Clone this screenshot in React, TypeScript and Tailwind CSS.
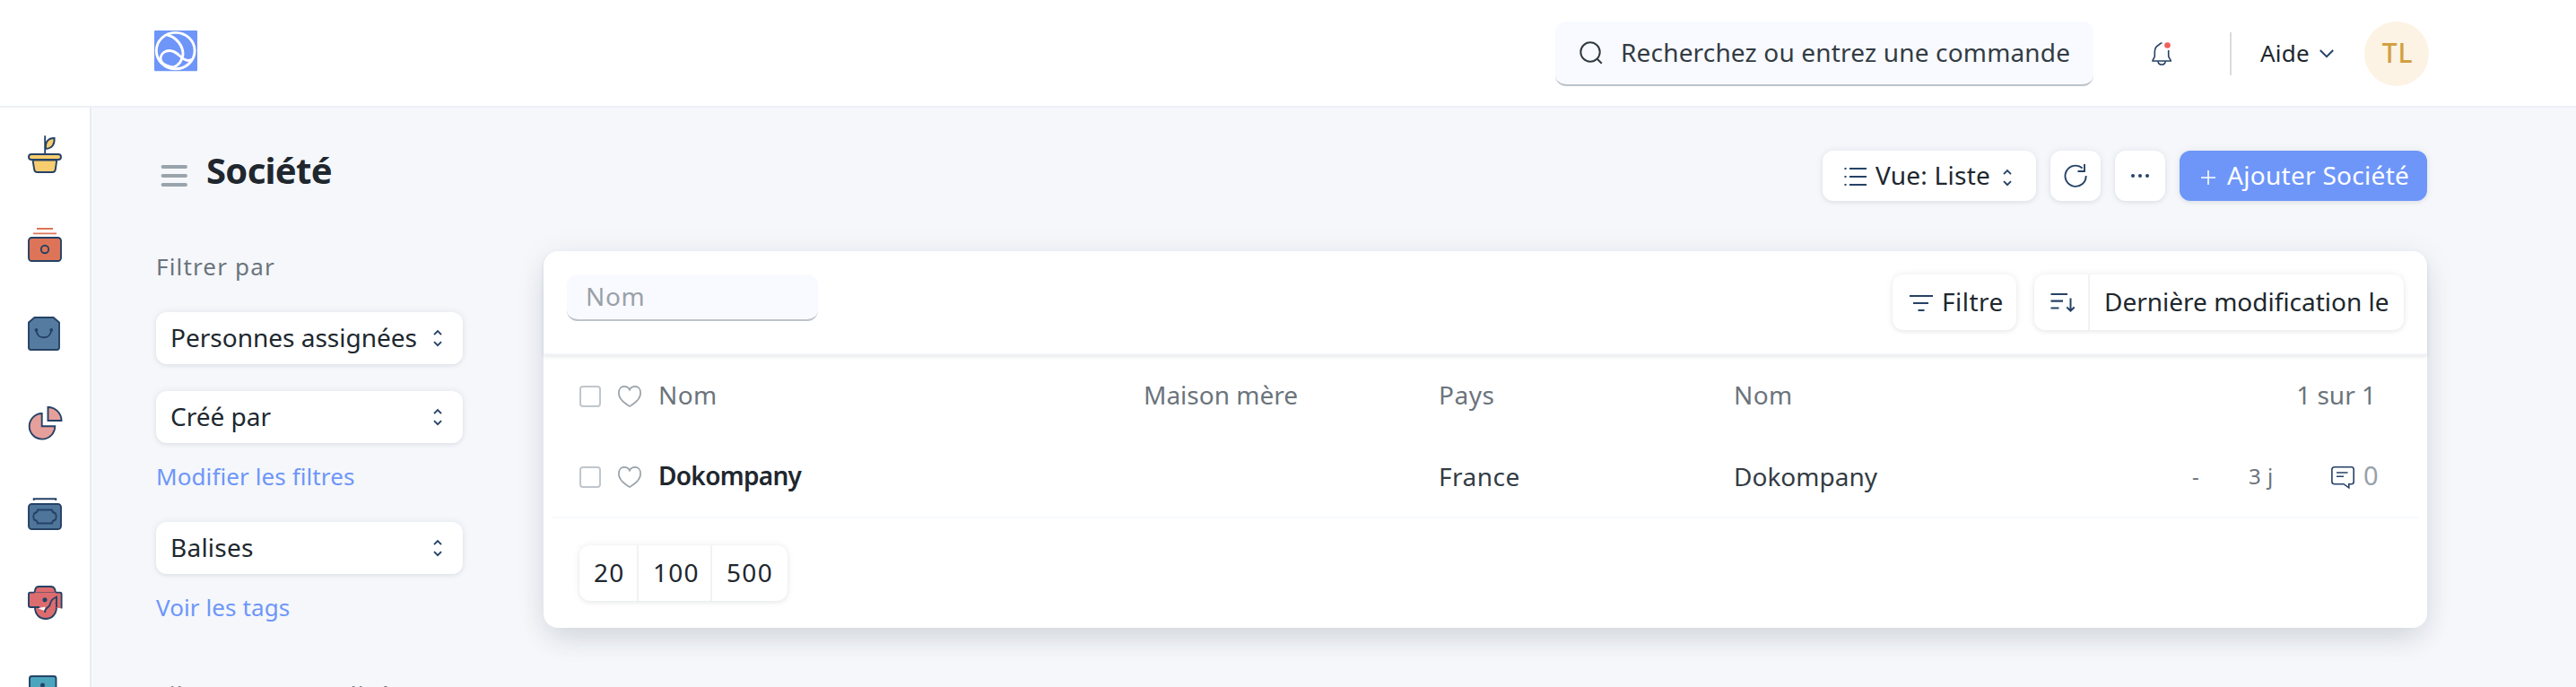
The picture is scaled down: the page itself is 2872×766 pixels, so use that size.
import React from "react";

const SHADOW = "shadow-[0_2px_4px_rgba(25,39,52,0.05),0_0_8px_rgba(25,39,52,0.08)]";

function Logo() {
  return (
    <svg className="mt-[34px] h-[46px] w-12 shrink-0" viewBox="0 0 48 46" fill="none">
      <rect width="48" height="45.3" rx="1" fill="#6e95f8" />
      <g stroke="#fff" strokeWidth="2.9">
        <ellipse cx="23.7" cy="22.6" rx="21.4" ry="20.2" />
        <path d="M14.5 5C24 7 32.500 17 32 27C31 34 27.500 38.500 21.500 41" />
        <path d="M21.500 41C12 39.500 6.500 35.500 7 30C8 25.500 12 22.500 17 22.500C27 22.500 30 33.500 38 33.500C39.500 33.500 41 33 42 32" />
      </g>
    </svg>
  );
}

const navIcons: React.ReactNode[] = [
  <g key="pot" fill="#f8cd6f">
    <path d="M10.500 30.500L12.200 41Q12.700 44 15.500 44H32.500Q35.300 44 35.800 41L37.300 30.500Z" />
    <rect x="6" y="24" width="36" height="6" rx="3" />
    <path d="M25 17.800C24.300 10.500 27.500 5.900 34.600 6C35 12.500 32.500 17.600 25 17.800Z" />
    <path d="M24.200 3.300V24" />
  </g>,
  <g key="safe">
    <path d="M15 7H33M11 12.300H37" stroke="#de7457" strokeWidth="1.800" />
    <rect x="6" y="17" width="36" height="26" rx="3.500" fill="#de7457" />
    <circle cx="24" cy="30" r="4.200" />
  </g>,
  <g key="bag">
    <path d="M12.500 6H33.500L40 11.500V39.500Q40 42 37.500 42H8.500Q6 42 6 39.500V11.500Z" fill="#557ca0" />
    <path d="M14.500 20C15 25 18 28.300 22.700 28.300C27.500 28.300 30.700 25 31.200 20" />
    <circle cx="14.500" cy="20" r="1" />
    <circle cx="31.200" cy="20" r="1" />
  </g>,
  <g key="pie" fill="#e5a09b">
    <path d="M20.700 13A14.300 14.300 0 1 0 35.300 27.300H20.700Z" />
    <path d="M27.500 6V21H42.500A15 15 0 0 0 27.500 6Z" />
  </g>,
  <g key="money">
    <path d="M11.700 10V8.300H36.300V10" />
    <rect x="6" y="14" width="36" height="28" rx="3.500" fill="#4f759a" />
    <path d="M16 20.500H32Q32.500 24 36 24.500Q37.500 28 36 31.500Q32.500 32 32 35.500H16Q15.500 32 12 31.500Q10.500 28 12 24.500Q15.500 24 16 20.500Z" />
  </g>,
  <g key="people">
    <path d="M12.500 13Q13 6 17 6H31Q35.500 6 36 13Z" fill="#dd6c6e" />
    <path d="M13 24H37V29C37 37 31.500 42 25 42C18 42 13 37 13 29Z" fill="#dd6c6e" />
    <path d="M7.500 12.500H41Q42.500 12.500 42.500 14V30H37V24L24 29H8Q6 29 6 27.500V14.500Q6 12.500 7.500 12.500Z" fill="#dd6c6e" stroke="none" />
    <path d="M16.500 30.200L24.500 28.500L23.500 33Z" fill="#fff" stroke="none" />
    <path d="M42.600 30.500V14Q42.600 12.600 41 12.600H36M12.500 12.600H7.500Q6 12.600 6 14.500V27Q6 29 8 29H18" />
    <path d="M24 35C24 30.500 25.500 31 28 28.500C32 26 27 22 37 17.500V29" />
    <circle cx="24" cy="20.700" r="1.600" fill="#254266" />
  </g>,
  <g key="asset">
    <rect x="7" y="6" width="29.500" height="36" rx="2.500" fill="#4ba5bd" />
    <circle cx="21.500" cy="16" r="1.500" fill="#254266" />
  </g>,
];

function Updown() {
  return (
    <svg className="h-5 w-3 shrink-0" viewBox="0 0 12 20" fill="none" stroke="#254266" strokeWidth="1.9">
      <path d="M2 6.200L6 2.200L10 6.200M2 14.200L6 18.200L10 14.200" />
    </svg>
  );
}

function Select({ label, track }: { label: string; track: string }) {
  return (
    <div className={`flex h-[58px] w-[342px] items-center justify-between rounded-xl bg-white pr-[22px] pl-4 ${SHADOW}`}>
      <span className={`pb-[3px] text-[28px] leading-9 text-[#20272e] ${track}`}>{label}</span>
      <Updown />
    </div>
  );
}

function Heart() {
  return (
    <svg className="ml-[18px] h-[26px] w-7 shrink-0" viewBox="0 0 28 26" fill="none" stroke="#98a1a9" strokeWidth="1.700">
      <path d="M14 24.100C9 21 1.900 16.500 1.900 9C1.900 4.500 4.500 1.900 7.800 1.900C10.500 1.900 12.600 2.800 14 5.600C15.400 2.800 17.500 1.900 20.200 1.900C23.500 1.900 26.100 4.500 26.100 9C26.100 16.500 19 21 14 24.100Z" />
    </svg>
  );
}

function Checkbox() {
  return <div className="size-6 shrink-0 rounded-[4px] border-2 border-[#c0c6cc] bg-white" />;
}

export default function App() {
  return (
    <div className="flex h-[766px] w-[2872px] flex-col overflow-hidden bg-[#f5f7fb] font-['Noto_Sans','DejaVu_Sans',sans-serif] whitespace-nowrap">
      <header className="flex h-[120px] shrink-0 border-b-2 border-[#edf0f5] bg-white pl-[172px]">
        <Logo />
        <div className="mt-6 ml-[1514px] flex h-[72px] w-[600px] shrink-0 items-center rounded-xl border-b-2 border-[#bcc3ca] bg-[#f9faff] pl-[27px]">
          <svg className="size-[26px]" viewBox="0 0 26 26" fill="none" stroke="#333c44" strokeWidth="2">
            <circle cx="12" cy="12" r="10.700" />
            <path d="M19.500 19.500L24.800 24.800" />
          </svg>
          <span className="ml-[20px] pb-[3px] text-[28px] leading-9 tracking-[0.17px] text-[#333c44]">Recherchez ou entrez une commande</span>
        </div>
        <svg className="mt-[46px] ml-[63px] h-7 w-7 shrink-0" viewBox="0 0 28 28" fill="none" stroke="#254266" strokeWidth="1.600">
          <path d="M13.500 2C11 2 11.200 3.500 9.500 4.200C6.500 5.800 5.300 8.500 5.300 12V16.500C5.300 19 3 19.500 3 22H23.200C23.200 19.500 20.700 19 20.700 16.500V10" />
          <path d="M9 22.300C9.500 27.300 16.700 27.300 17.200 22.300" />
          <circle cx="19.500" cy="4.500" r="3.300" fill="#f0605b" stroke="none" />
        </svg>
        <div className="mt-9 ml-[61px] h-12 w-0.5 shrink-0 bg-[#d9dbdd]" />
        <div className="mt-6 ml-8 flex h-[72px] items-center">
          <span className="w-[56px] pb-0.5 text-[26px] leading-9 tracking-[0.23px] text-[#20272e]">Aide</span>
          <svg className="ml-[9px] h-3 w-[18px]" viewBox="0 0 18 12" fill="none" stroke="#254266" strokeWidth="2">
            <path d="M1.800 2L9 9.200L16.200 2" />
          </svg>
        </div>
        <div className="mt-6 ml-[33px] flex size-[72px] shrink-0 items-center justify-center rounded-full bg-[#fdf3e4] pb-0.5 pl-0.5 text-[30px] leading-9 font-medium tracking-[0.8px] text-[#d1a041]">TL</div>
      </header>

      <div className="flex min-h-0 flex-1">
        <nav className="flex w-[102px] shrink-0 flex-col overflow-hidden border-r-2 border-[#e8ecf1] bg-white pt-0.5">
          {navIcons.map((icon, i) => (
            <div key={i} className="flex h-[100px] shrink-0 items-center justify-center">
              <svg className="size-12" viewBox="0 0 48 48" fill="none" stroke="#254266" strokeWidth="1.900">
                {icon}
              </svg>
            </div>
          ))}
        </nav>

        <main className="flex w-[2604px] shrink-0 flex-col pl-[72px]">
          <div className="flex h-[160px] shrink-0">
            <svg className="mt-[60px] ml-1 h-8 w-8 shrink-0" viewBox="0 0 32 32" fill="none" stroke="#99a3ab" strokeWidth="3.800" strokeLinecap="round">
              <path d="M3.500 6H29M3.500 16H29M3.500 26H29" />
            </svg>
            <h1 className="mt-[45px] ml-5 text-[40px] leading-[50px] font-bold tracking-[-0.7px] text-[#20272e]">Société</h1>
            <div className="mt-12 ml-auto flex h-14 text-[28px] leading-9 text-[#20272e]">
              <div className={`flex w-[238px] items-center rounded-xl bg-white pl-6 ${SHADOW}`}>
                <svg className="h-6 w-[26px]" viewBox="0 0 26 24" fill="none" stroke="#254266" strokeWidth="2.200">
                  <path d="M6 4H25M6 13H25M6 22H25" />
                  <path d="M0.500 4H2.500M0.500 13H2.500M0.500 22H2.500" />
                </svg>
                <span className="ml-[9px] w-[134px] pb-0.5 tracking-[0.24px]">Vue: Liste</span>
                <div className="ml-[7px] pt-1"><Updown /></div>
              </div>
              <div className={`ml-4 flex w-14 items-center justify-center rounded-xl bg-white ${SHADOW}`}>
                <svg className="size-7" viewBox="0 0 28 28" fill="none" stroke="#254266" strokeWidth="1.900">
                  <path d="M21.700 5.500A11.600 11.600 0 1 0 25.700 14" />
                  <path d="M24 1V9H16.500" />
                </svg>
              </div>
              <div className={`ml-4 flex w-14 items-center justify-center gap-[4px] rounded-xl bg-white ${SHADOW}`}>
                <div className="size-[4px] rounded-full bg-[#254266]" />
                <div className="size-[4px] rounded-full bg-[#254266]" />
                <div className="size-[4px] rounded-full bg-[#254266]" />
              </div>
              <div className={`ml-4 flex w-[276px] items-center rounded-xl bg-[#6e96f9] pl-[23px] text-white ${SHADOW}`}>
                <svg className="mt-1 size-[18px]" viewBox="0 0 18 18" fill="none" stroke="#fff" strokeWidth="1.600">
                  <path d="M9 1V17M1 9H17" />
                </svg>
                <span className="ml-3 pb-0.5 tracking-[0.29px]">Ajouter Société</span>
              </div>
            </div>
          </div>

          <div className="flex">
            <aside className="flex w-[432px] shrink-0 flex-col">
              <div className="h-[68px] pt-px text-[26px] leading-8 tracking-[1.170px] text-[#6b747c]">Filtrer par</div>
              <Select label="Personnes assignées" track="tracking-[0px]" />
              <div className="h-[30px]" />
              <Select label="Créé par" track="tracking-[0px]" />
              <div className="h-[88px] pt-[19px] text-[26px] leading-9 tracking-[0.100px] text-[#6e96f9]">Modifier les filtres</div>
              <Select label="Balises" track="tracking-[0.240px]" />
              <div className="h-[118px] pt-[19px] text-[26px] leading-9 tracking-[0.100px] text-[#6e96f9]">Voir les tags</div>
              <div className="text-[26px] leading-8 tracking-[1.250px] text-[#6b747c]">Filtres personnalisés</div>
            </aside>

            <section className="h-[420px] w-[2100px] shrink-0 rounded-2xl bg-white shadow-[0_16px_32px_-6px_rgba(25,39,52,0.12),0_4px_36px_rgba(25,39,52,0.07)]">
              <div className="flex h-[116px] rounded-t-2xl border-b-2 border-[#f3f4fa] pt-[26px] pr-[26px] pl-[26px] shadow-[0_2px_4px_rgba(25,39,52,0.1)]">
                <div className="flex h-[52px] w-[280px] items-center rounded-xl border-b-2 border-[#bcc3ca] bg-[#f9faff] pb-[3px] pl-[21px] text-[28px] leading-9 tracking-[0.640px] text-[#99a1a8]">Nom</div>
                <div className="ml-auto flex h-[62px] text-[28px] leading-9 text-[#20272e]">
                  <div className={`flex w-[138px] items-center rounded-xl bg-white pl-[19px] ${SHADOW}`}>
                    <svg className="mt-0.5 h-5 w-[26px]" viewBox="0 0 26 20" fill="none" stroke="#254266" strokeWidth="2.200">
                      <path d="M0 2H26M4 10H21M9.500 18H16.500" />
                    </svg>
                    <span className="ml-[10px] pb-[3px] tracking-[0.480px]">Filtre</span>
                  </div>
                  <div className={`ml-5 flex w-[412px] items-center rounded-xl bg-white ${SHADOW}`}>
                    <div className="flex h-full w-[62px] items-center border-r-2 border-[#f1f2f4] pl-[18px]">
                      <svg className="h-6 w-7" viewBox="0 0 28 24" fill="none" stroke="#254266" strokeWidth="2">
                        <path d="M0.500 3H19M0.500 10.700H14M0.500 18.500H9.500" strokeWidth="2.200" />
                        <path d="M22.500 7.500V21.500M18.300 17.500L22.500 21.700L26.700 17.500" />
                      </svg>
                    </div>
                    <span className="ml-4 pb-[3px]">Dernière modification le</span>
                  </div>
                </div>
              </div>

              <div className="flex h-[90px] items-center pt-0.5 pl-10 text-[28px] leading-9 text-[#6b747c]">
                <Checkbox />
                <Heart />
                <div className="ml-[18px] w-[541px] pb-[5px] tracking-[0.400px]">Nom</div>
                <div className="w-[329px] pb-[5px]">Maison mère</div>
                <div className="w-[329px] pb-[5px] tracking-[0.500px]">Pays</div>
                <div className="pb-[5px] tracking-[0.400px]">Nom</div>
                <div className="ml-auto pr-[57px] pb-[5px]">1 sur 1</div>
              </div>

              <div className="mx-2.5 flex h-[92px] items-center border-b-2 border-[#f8f9fe] pt-0.5 pl-[30px] text-[28px] leading-9 text-[#333c44]">
                <Checkbox />
                <Heart />
                <div className="ml-[18px] w-[870px] pb-1 font-semibold tracking-[-0.700px] text-[#20272e]">Dokompany</div>
                <div className="w-[329px] pb-[3px] tracking-[0.500px]">France</div>
                <div className="pb-[3px]">Dokompany</div>
                <div className="ml-auto flex items-center pr-[41px] text-2xl text-[#6b747c]">
                  <span className="w-[63px] pb-0.5">-</span>
                  <span className="w-[92px] pb-0.5 tracking-[0.500px]">3 j</span>
                  <svg className="h-[26px] w-[26px]" viewBox="0 0 26 26" fill="none" stroke="#254266" strokeWidth="1.600">
                    <path d="M4 1.800H22.500Q25.200 1.800 25.200 4.500V18Q25.200 20.700 22.500 20.700H19.800V24.800L14 20.700H4Q0.900 20.700 0.900 18V4.500Q0.900 1.800 4 1.800Z" />
                    <path d="M6 8H18.500M6 12.300H14" />
                  </svg>
                  <span className="ml-[10px] w-5 pb-1 text-[29px] text-[#98a1a9]">0</span>
                </div>
              </div>

              <div className={`mt-[30px] ml-10 flex h-[62px] w-[232px] rounded-xl bg-white text-[28px] leading-9 text-[#20272e] ${SHADOW}`}>
                <div className="flex w-[66px] items-center border-r-2 border-[#f1f2f4] pb-[3px] pl-4 tracking-[1.300px]">20</div>
                <div className="flex w-[82px] items-center border-r-2 border-[#f1f2f4] pb-[3px] pl-[16px] tracking-[1.200px]">100</div>
                <div className="flex w-[84px] items-center pb-[3px] pl-4 tracking-[1.300px]">500</div>
              </div>
            </section>
          </div>
        </main>
      </div>
    </div>
  );
}
